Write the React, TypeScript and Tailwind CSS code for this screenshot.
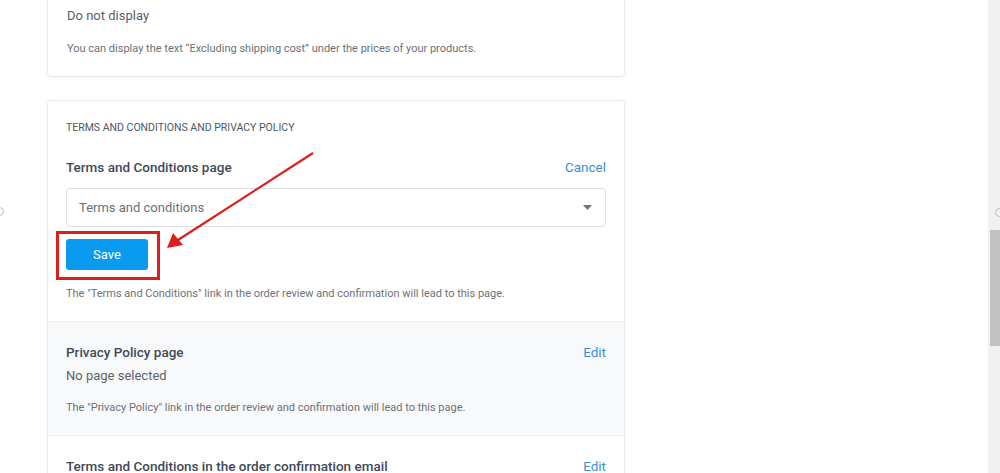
import React from "react";

export default function App() {
  return (
    <div className="relative w-[1000px] h-[473px] overflow-hidden bg-white" style={{ fontFamily: "Roboto, 'Liberation Sans', sans-serif" }}>
      {/* left edge glyph */}
      <div className="absolute left-[-5px] top-[207px] w-[9px] h-[9px] rounded-full border border-[#bdbdbd]" />
      {/* scrollbar */}
      <div className="absolute right-0 top-0 w-[12px] h-[473px] bg-[#f1f1f1]">
        <div className="absolute left-[7px] top-[208px] w-[9px] h-[9px] rounded-full border border-[#bdbdbd]" />
        <div className="absolute left-[2px] top-[230px] w-[10px] h-[116px] bg-[#c1c1c1]" />
      </div>

      <div className="ml-[47px] w-[578px] flex flex-col gap-[23px]">
        {/* Card 1 */}
        <div className="-mt-[15px] pt-[20px] pb-[20px] px-[19px] bg-white rounded-[4px] border border-[#e9edf2] shadow-[0_1px_4px_rgba(30,50,80,0.06)]">
          <div className="text-[13px] leading-[20px] text-[#595f67]">Do not display</div>
          <div className="mt-[16px] text-[11px] leading-[14px] text-[#6c7178]">
            You can display the text “Excluding shipping cost” under the prices of your products.
          </div>
        </div>

        {/* Card 2 */}
        <div className="relative bg-white rounded-[4px] border border-[#e9edf2] shadow-[0_1px_4px_rgba(30,50,80,0.06)] overflow-hidden">
          <div className="pt-[20px] pb-[20px] px-[18px]">
            <div className="text-[10.5px] leading-[14px] uppercase text-[#4d5766]">
              Terms and Conditions and Privacy Policy
            </div>
            <div className="mt-[22px] flex items-center justify-between h-[20px]">
              <div className="text-[13.5px] font-medium text-[#3f4958]">Terms and Conditions page</div>
              <div className="text-[13.5px] text-[#3d8fcc]">Cancel</div>
            </div>
            <div className="mt-[11px] h-[39px] rounded-[4px] border border-[#dcdfe3] flex items-center justify-between pl-[12px] pr-[13px]">
              <span className="text-[13px] text-[#6b7078]">Terms and conditions</span>
              <svg width="9" height="5" viewBox="0 0 9 5"><path d="M0 0h9L4.5 5z" fill="#6f757c" /></svg>
            </div>
            <div className="relative mt-[12px] h-[31px]">
              <button className="w-[82px] h-[31px] rounded-[3px] bg-[#0a9af0] text-white text-[13px]">Save</button>
              <div className="absolute left-[-10px] top-[-8px] w-[104px] h-[49px] border-[3px] border-[#dc1e1e]" />
            </div>
            <div className="mt-[17px] text-[11px] leading-[14px] text-[#6c7178]">
              The "Terms and Conditions" link in the order review and confirmation will lead to this page.
            </div>
          </div>

          <div className="bg-[#f8f9fb] border-t border-[#eef0f3] pt-[20px] pb-[20px] px-[18px]">
            <div className="flex items-center justify-between h-[20px]">
              <div className="text-[13.5px] font-medium text-[#3f4958]">Privacy Policy page</div>
              <div className="text-[13.5px] text-[#3d8fcc]">Edit</div>
            </div>
            <div className="mt-[4px] text-[13px] leading-[20px] text-[#5d636b]">No page selected</div>
            <div className="mt-[15px] text-[11px] leading-[14px] text-[#6c7178]">
              The "Privacy Policy" link in the order review and confirmation will lead to this page.
            </div>
          </div>

          <div className="border-t border-[#eef0f3] pt-[20px] pb-[20px] px-[18px]">
            <div className="flex items-center justify-between h-[20px]">
              <div className="text-[13.5px] font-medium text-[#3f4958]">Terms and Conditions in the order confirmation email</div>
              <div className="text-[13.5px] text-[#3d8fcc]">Edit</div>
            </div>
          </div>
        </div>
      </div>

      {/* red arrow annotation */}
      <svg className="absolute left-0 top-0 pointer-events-none" width="1000" height="473">
        <line x1="313" y1="153" x2="178" y2="240" stroke="#dc1e1e" strokeWidth="2.2" />
        <path d="M167 248 L173 233 L183 245 Z" fill="#dc1e1e" />
      </svg>
    </div>
  );
}
